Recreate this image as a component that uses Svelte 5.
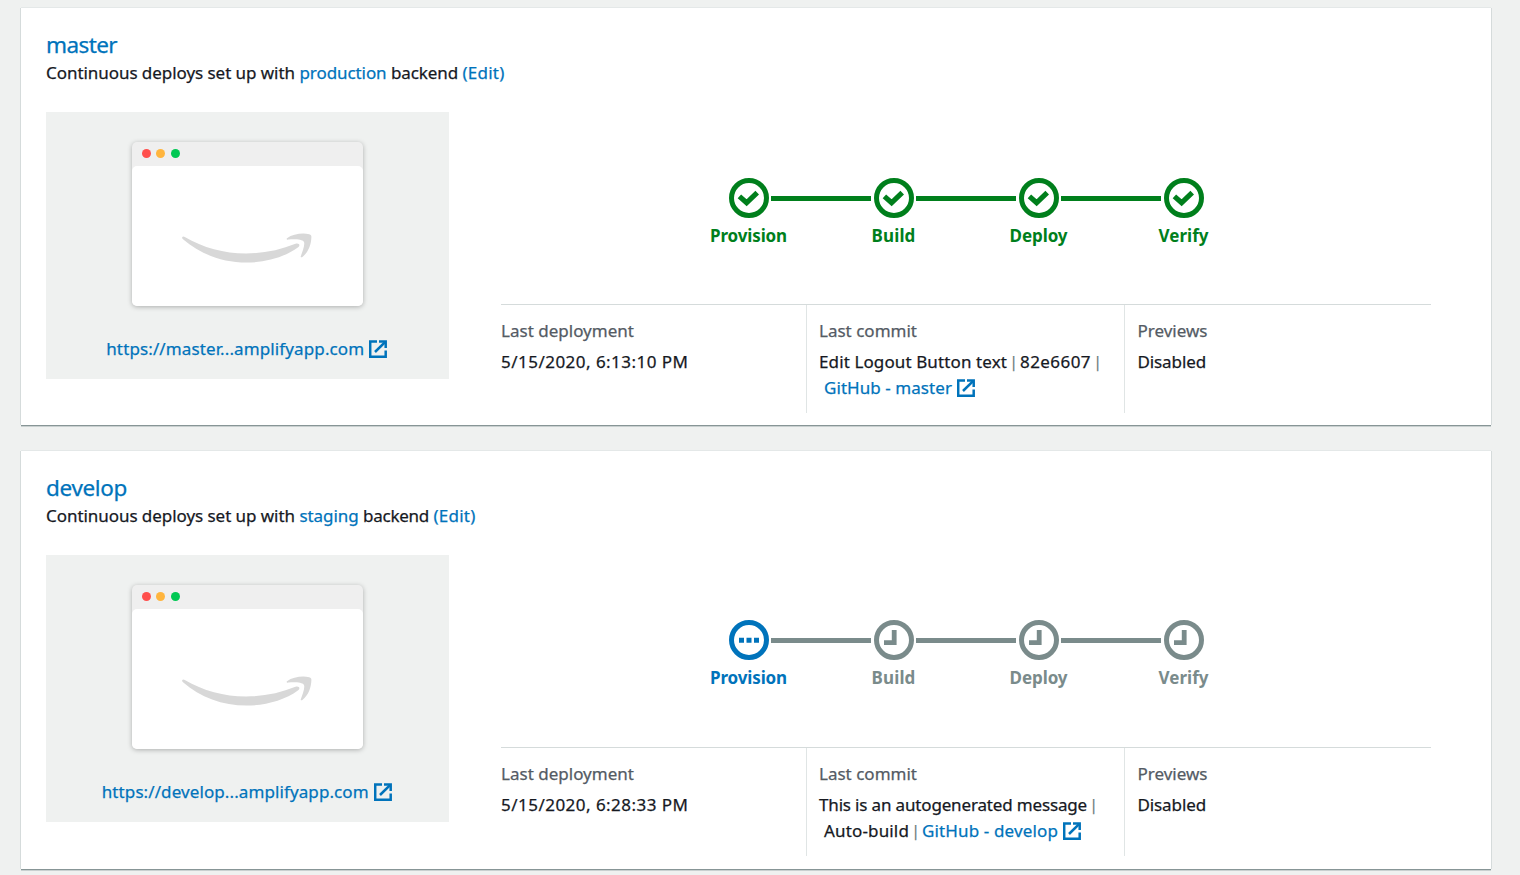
<script>
  const branches = [
    {
      name: 'master', nameW: 71,
      env: 'production', envW: 87,
      backendW: 67,
      url: 'https://master...amplifyapp.com', urlW: 258,
      steps: [
        { label: 'Provision', w: 77, state: 'done' },
        { label: 'Build', w: 44, state: 'done' },
        { label: 'Deploy', w: 58, state: 'done' },
        { label: 'Verify', w: 50, state: 'done' }
      ],
      deployed: '5/15/2020, 6:13:10 PM',
      commit: [
        [{ text: 'Edit Logout Button text', w: 188 }, { sep: true }, { text: '82e6607', w: 71 }, { sep: true }],
        [{ link: 'GitHub - master', w: 128 }]
      ]
    },
    {
      name: 'develop', nameW: 81,
      env: 'staging', envW: 59,
      backendW: 66,
      url: 'https://develop...amplifyapp.com', urlW: 267,
      steps: [
        { label: 'Provision', w: 77, state: 'active' },
        { label: 'Build', w: 44, state: 'waiting' },
        { label: 'Deploy', w: 58, state: 'waiting' },
        { label: 'Verify', w: 50, state: 'waiting' }
      ],
      deployed: '5/15/2020, 6:28:33 PM',
      commit: [
        [{ text: 'This is an autogenerated message', w: 268 }, { sep: true }],
        [{ text: 'Auto-build', w: 85 }, { sep: true }, { link: 'GitHub - develop', w: 136 }]
      ]
    }
  ];

  // Tracks a label out or in so that it fills the given width.
  function fit(node, width) {
    const natural = node.getBoundingClientRect().width;
    node.style.letterSpacing = `${(width - natural) / node.textContent.length}px`;
  }
</script>

{#snippet external()}
  <svg class="external" width="18" height="18" viewBox="0 0 18 18" fill="none" stroke="currentColor" stroke-width="2.5">
    <path d="M8 1.4H1.2V16.7H16.7V10.6" />
    <path d="M10 1.4H16.7V8" />
    <path d="M16.3 1.8L6 12" />
  </svg>
{/snippet}

<main>
  {#each branches as b}
    <section class="card">
      <h2><a use:fit={b.nameW}>{b.name}</a></h2>
      <p class="sub">
        <span use:fit={249}>Continuous deploys set up with</span>
        <a use:fit={b.envW}>{b.env}</a>
        <span use:fit={b.backendW}>backend</span>
        <a use:fit={42}>(Edit)</a>
      </p>
      <div class="body">
        <div class="thumb">
          <div class="window">
            <div class="bar"><i class="red"></i><i class="amber"></i><i class="green"></i></div>
            <div class="page">
              <svg width="132" height="32" viewBox="0 0 132 32" fill="#d8d8d8">
                <path d="M1.2 4.2C1.6 3.2 2.6 3.2 3.8 3.9C22 14.5 43 20.4 65 20.4C82 20.4 99 17.2 114.5 10.8C117.5 9.6 120 12 117.2 14.2C103.5 24.4 83.5 29.6 65.5 29.6C41.5 29.6 19 21 2 6.2C1.2 5.4 1 4.8 1.2 4.2Z" />
                <path d="M106 5.2C111.8 1 121.5 -.4 128.2 1.2C130 1.7 130.4 2.4 130.4 4C130.2 11.4 127.6 19 121.4 24C120.4 24.7 119.4 24.3 119.8 23.2C121.4 19 124.4 11.2 122.8 8.8C121.2 6.2 113.2 6 107.4 6.6C105.8 6.8 105.2 6 106 5.2Z" />
              </svg>
            </div>
          </div>
          <a class="url"><span use:fit={b.urlW}>{b.url}</span>{@render external()}</a>
        </div>
        <div class="details">
          <ol class="steps">
            {#each b.steps as s, i}
              {#if i > 0}<li class="line {s.state}"></li>{/if}
              <li class="step {s.state}">
                <svg width="40" height="40" viewBox="0 0 40 40" fill="none" stroke="currentColor">
                  <circle cx="20" cy="20" r="17.5" stroke-width="5" />
                  {#if s.state === 'done'}
                    <path d="M10.4 18.4L17.6 24.8L28.2 14.6" stroke-width="5.2" />
                  {:else if s.state === 'active'}
                    <path d="M10 20.2H30" stroke-width="5" stroke-dasharray="5 2.5" />
                  {:else}
                    <path d="M20.2 10V22.7H10" stroke-width="4.8" />
                  {/if}
                </svg>
                <b><span use:fit={s.w}>{s.label}</span></b>
              </li>
            {/each}
          </ol>
          <div class="info">
            <div class="cell first">
              <div class="label"><span use:fit={133}>Last deployment</span></div>
              <div class="row"><span use:fit={187.5}>{b.deployed}</span></div>
            </div>
            <div class="cell second">
              <div class="label"><span use:fit={98}>Last commit</span></div>
              {#each b.commit as row, r}
                <div class="row" class:wrapped={r > 0}>
                  {#each row as part}
                    {#if part.sep}
                      <span class="sep">|</span>
                    {:else if part.link}
                      <a><span use:fit={part.w}>{part.link}</span>{@render external()}</a>
                    {:else}
                      <span use:fit={part.w}>{part.text}</span>
                    {/if}
                  {/each}
                </div>
              {/each}
            </div>
            <div class="cell third">
              <div class="label"><span use:fit={70}>Previews</span></div>
              <div class="row"><span use:fit={68.5}>Disabled</span></div>
            </div>
          </div>
        </div>
      </div>
    </section>
  {/each}
</main>

<style>
  :global(body) { margin: 0; background: #eff1f0; overflow: hidden; }
  main {
    box-sizing: border-box;
    height: 875px;
    overflow: hidden;
    padding: 8px 29px 0 21px;
    display: flex;
    flex-direction: column;
    gap: 26px;
    font: 17px/26px 'Noto Sans', 'Open Sans', sans-serif;
    color: #16191f;
    background: #eff1f0;
    -webkit-text-stroke: 0.25px currentColor;
  }
  .card {
    box-sizing: border-box;
    flex: none;
    height: 417px;
    padding: 23px 25px 0;
    background: #fff;
    box-shadow: 0 1px 0 #879596, 0 2px 0 #c9d0d0, 1px 0 0 #d5dbdb, -1px 0 0 #d5dbdb, 0 -1px 0 #e4e8e8;
  }
  .card + .card { height: 418px; }
  a { color: #0073bb; white-space: nowrap; }
  span { white-space: nowrap; }
  h2 { margin: 0; font-size: 22.5px; line-height: 28px; font-weight: 400; }
  .sub { margin: 1px 0 0; display: flex; gap: 4.5px; }
  .body { display: flex; margin-top: 26px; }
  .thumb {
    width: 403px;
    height: 267px;
    background: #eff1f0;
    display: flex;
    flex-direction: column;
    align-items: center;
  }
  .window {
    width: 231px;
    height: 164px;
    margin: 30px 1px 0 0;
    border-radius: 5px;
    background: #efefef;
    box-shadow: 0 1px 5px rgba(0, 0, 0, 0.28);
    display: flex;
    flex-direction: column;
  }
  .bar { height: 23.5px; display: flex; align-items: center; gap: 5.5px; padding-left: 10px; }
  .bar i { width: 9px; height: 9px; border-radius: 50%; }
  .red { background: #ff4f4d; }
  .amber { background: #ffb53e; }
  .green { background: #00c853; }
  .page {
    flex: 1;
    background: #fff;
    border-radius: 5px;
    display: flex;
    justify-content: center;
    padding-top: 67.5px;
  }
  .url { display: flex; align-items: center; margin: 30px 1.5px 0 0; }
  .external { flex: none; margin-left: 5px; }
  .details { width: 930px; margin-left: 52px; }
  .steps {
    list-style: none;
    margin: 0;
    padding: 66px 0 0;
    height: 126px;
    display: flex;
    justify-content: center;
    gap: 2px;
  }
  .card + .card .steps { padding-top: 65px; height: 127px; }
  .step { width: 40px; display: flex; flex-direction: column; align-items: center; }
  .step svg { flex: none; }
  .step b { line-height: 26px; margin-top: 5px; -webkit-text-stroke: 0; }
  .line { width: 100px; height: 5px; margin: 17.5px 1px 0 0; background: currentColor; }
  .done { color: #007f1c; }
  .active { color: #0073bb; }
  .waiting { color: #7a8b8b; }
  .info { display: flex; border-top: 1px solid #d5dbdb; }
  .cell { box-sizing: border-box; height: 108px; padding-top: 13px; }
  .first { width: 305px; }
  .second { width: 318px; border-left: 1px solid #e0e5e5; padding-left: 12px; }
  .third { border-left: 1px solid #e0e5e5; padding-left: 12.5px; }
  .label { color: #545b64; height: 31px; }
  .row { display: flex; align-items: center; }
  .row a { display: flex; align-items: center; }
  .wrapped { padding-left: 5px; }
  .sep { width: 13px; text-align: center; font-size: 14px; color: #687878; }
</style>
